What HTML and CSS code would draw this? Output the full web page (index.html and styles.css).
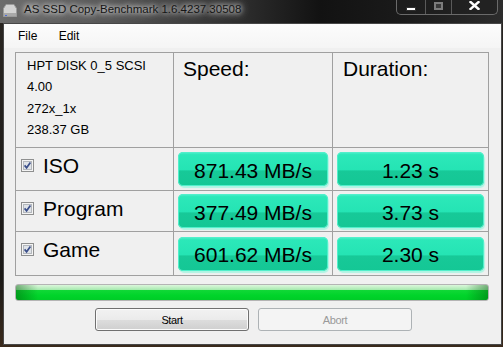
FILE: index.html
```html
<!DOCTYPE html>
<html>
<head>
	<meta charset="UTF-8">
	<title>AS SSD Copy-Benchmark</title>
	<link rel="stylesheet" href="styles.css">
</head>
<body>
	<div class="titlebar">
		<svg class="appicon" width="14" height="13" viewBox="0 0 14 13">
			<path d="M3 0.5 H11 L13.5 4.5 V12.5 H0.5 V4.5 Z" fill="#d2d2d2" stroke="#9a9a9a"/>
			<rect x="1" y="9" width="12" height="3" fill="#a8a8a8"/>
			<rect x="2" y="11" width="2" height="1" fill="#4a6ad8"/>
		</svg>
		<span class="title">AS SSD Copy-Benchmark 1.6.4237.30508</span>
		<div class="caption">
			<div class="cbtn min"><span></span></div>
			<div class="cbtn max"><span></span></div>
			<div class="cbtn close">
				<svg width="11" height="9" viewBox="0 0 11 9">
					<path d="M1.5 1 L9.5 8 M9.5 1 L1.5 8" stroke="#fff" stroke-width="2.4" stroke-linecap="square"/>
				</svg>
			</div>
		</div>
	</div>
	<div class="client">
		<div class="menu">
			<span class="menuitem">File</span>
			<span class="menuitem">Edit</span>
		</div>
		<div class="grid">
			<div class="cell info">
				<div>HPT DISK 0_5 SCSI</div>
				<div>4.00</div>
				<div>272x_1x</div>
				<div>238.37 GB</div>
			</div>
			<div class="cell head">Speed:</div>
			<div class="cell head head3">Duration:</div>

			<div class="cell label">
				<svg class="check" width="13" height="13" viewBox="0 0 13 13">
					<rect x="0.5" y="0.5" width="12" height="12" fill="#f4f4f4" stroke="#8e8f8f"/>
					<rect x="2.5" y="2.5" width="8" height="8" fill="#dfe3e8" stroke="#b4b8bd"/>
					<path d="M3.6 6.4 L5.6 8.8 L9.4 3.6" stroke="#3b4f8a" stroke-width="1.7" fill="none"/>
				</svg>
				<span>ISO</span>
			</div>
			<div class="cell val"><div class="box">871.43 MB/s</div></div>
			<div class="cell val"><div class="box">1.23 s</div></div>

			<div class="cell label">
				<svg class="check" width="13" height="13" viewBox="0 0 13 13">
					<rect x="0.5" y="0.5" width="12" height="12" fill="#f4f4f4" stroke="#8e8f8f"/>
					<rect x="2.5" y="2.5" width="8" height="8" fill="#dfe3e8" stroke="#b4b8bd"/>
					<path d="M3.6 6.4 L5.6 8.8 L9.4 3.6" stroke="#3b4f8a" stroke-width="1.7" fill="none"/>
				</svg>
				<span>Program</span>
			</div>
			<div class="cell val"><div class="box">377.49 MB/s</div></div>
			<div class="cell val"><div class="box">3.73 s</div></div>

			<div class="cell label">
				<svg class="check" width="13" height="13" viewBox="0 0 13 13">
					<rect x="0.5" y="0.5" width="12" height="12" fill="#f4f4f4" stroke="#8e8f8f"/>
					<rect x="2.5" y="2.5" width="8" height="8" fill="#dfe3e8" stroke="#b4b8bd"/>
					<path d="M3.6 6.4 L5.6 8.8 L9.4 3.6" stroke="#3b4f8a" stroke-width="1.7" fill="none"/>
				</svg>
				<span>Game</span>
			</div>
			<div class="cell val"><div class="box">601.62 MB/s</div></div>
			<div class="cell val"><div class="box">2.30 s</div></div>
		</div>
		<div class="progress"></div>
		<div class="buttons">
			<button type="button" class="btn">Start</button>
			<button type="button" class="btn disabled">Abort</button>
		</div>
	</div>
</body>
</html>
```

FILE: styles.css
```css
body {
	margin: 0;
	width: 503px;
	height: 347px;
	overflow: hidden;
	font-family: "Liberation Sans", Arial, sans-serif;
	background: linear-gradient(to bottom, #2a2622 0%, #1c1a18 80%, #3a2a1c 100%);
}
.titlebar {
	display: flex;
	align-items: flex-start;
	height: 23px;
	background: linear-gradient(to right, #6c6c6c 0, #565656 110px, #2e2e2e 240px, #121212 320px, #1a1a1a 400px, #2c2c2c 100%);
}
.appicon {
	margin: 4px 0 0 3px;
	flex-shrink: 0;
}
.title {
	margin-left: 7px;
	padding-top: 2px;
	font-size: 11.5px;
	line-height: 14px;
	color: #151515;
	text-shadow: 0 0 5px #fff, 0 0 9px rgba(255,255,255,0.7), 0 0 14px rgba(255,255,255,0.4);
}
.caption {
	display: flex;
	margin-left: auto;
	margin-right: 5px;
	height: 14px;
	border: 1px solid #6a6a6a;
	border-top: none;
	border-radius: 0 0 5px 5px;
	background: rgba(30,30,30,0.6);
	overflow: hidden;
}
.cbtn {
	display: flex;
	align-items: center;
	justify-content: center;
	height: 14px;
	border-right: 1px solid #5a5a5a;
}
.cbtn.min {
	width: 28px;
}
.cbtn.min span {
	width: 8px;
	height: 2px;
	margin-top: 3px;
	background: #fff;
	border: 1px solid #303030;
}
.cbtn.max {
	width: 25px;
}
.cbtn.max span {
	width: 5px;
	height: 4px;
	margin-bottom: 3px;
	border: 2px solid #7c7c7c;
	background: #3a3a3a;
}
.cbtn.close {
	width: 45px;
	border-right: none;
	align-items: flex-start;
	padding-top: 1px;
	box-sizing: border-box;
}
.client {
	margin-left: 3px;
	width: 499px;
	height: 322px;
	box-sizing: border-box;
	border: 1px solid #474747;
	background: #f0f0f0;
}
.menu {
	height: 24px;
	padding-left: 5px;
	background: linear-gradient(to bottom, #fcfcfc, #f5f5f5);
	font-size: 12px;
	line-height: 24px;
	color: #000;
}
.menuitem {
	padding: 0 9px;
}
.grid {
	display: grid;
	grid-template-columns: 157px 158px 155px;
	grid-template-rows: 94px 42px 40px 43px;
	gap: 1px;
	width: max-content;
	margin: 4px 0 0 11px;
	border: 1px solid #a0a0a0;
	background: #a0a0a0;
}
.cell {
	background: #f0f0f0;
	color: #000;
}
.info {
	padding: 2px 0 0 11px;
	font-size: 13px;
	line-height: 21.3px;
}
.head {
	padding: 4px 0 0 9px;
	font-size: 21px;
	line-height: 24px;
}
.head3 {
	padding-left: 10px;
}
.label {
	display: flex;
	align-items: flex-start;
	padding: 6px 0 0 5px;
	font-size: 21px;
	line-height: 24px;
}
.check {
	margin: 5px 9px 0 0;
	flex-shrink: 0;
}
.val {
	display: flex;
	align-items: center;
	padding: 0 4px;
}
.box {
	flex: 1;
	height: 34px;
	box-sizing: border-box;
	padding-top: 3px;
	display: flex;
	align-items: center;
	justify-content: center;
	border-radius: 5px;
	font-size: 21px;
	color: #000;
	background: linear-gradient(to bottom, #55f2d0 0%, #2ce8b9 8%, #25e4b4 52%, #17c998 56%, #14c795 100%);
	box-shadow: 0 0 0 1px #52efcb inset, 1px 2px 1px #aef4e3;
}
.progress {
	width: 474px;
	height: 17px;
	box-sizing: border-box;
	margin: 8px 0 0 11px;
	border: 1px solid #b4b4b4;
	border-radius: 3px;
	background:
		linear-gradient(to right, rgba(0,90,10,0.45) 0, rgba(0,90,10,0) 22px, rgba(0,90,10,0) calc(100% - 22px), rgba(0,90,10,0.45) 100%),
		linear-gradient(to bottom, #dcf6dc 0%, #a9ebb1 30%, #10d836 36%, #00d42a 70%, #00cc28 100%);
}
.buttons {
	display: flex;
	gap: 9px;
	margin-top: 7px;
	padding-left: 91px;
}
.btn {
	width: 154px;
	height: 23px;
	margin: 0;
	padding: 0;
	border: 1px solid #707070;
	border-radius: 3px;
	font-family: "Liberation Sans", Arial, sans-serif;
	font-size: 11px;
	letter-spacing: -0.4px;
	color: #000;
	background: linear-gradient(to bottom, #f2f2f2 0%, #ebebeb 50%, #dddddd 51%, #cfcfcf 100%);
	box-shadow: inset 0 0 0 1px #fbfbfb;
}
.btn.disabled {
	border-color: #adb2b5;
	background: #f4f4f4;
	box-shadow: none;
	color: #9a9a9a;
}
```
